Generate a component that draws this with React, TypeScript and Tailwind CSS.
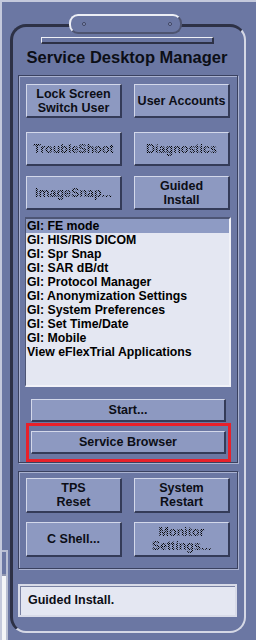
import React from 'react';

const listItems = [
  'GI: FE mode',
  'GI: HIS/RIS DICOM',
  'GI: Spr Snap',
  'GI: SAR dB/dt',
  'GI: Protocol Manager',
  'GI: Anonymization Settings',
  'GI: System Preferences',
  'GI: Set Time/Date',
  'GI: Mobile',
  'View eFlexTrial Applications',
];

type BtnProps = {
  children: React.ReactNode;
  disabled?: boolean;
  className?: string;
};

// raised motif-style button
const Btn = ({ children, disabled, className = '' }: BtnProps) => (
  <div
    className={`flex items-center justify-center text-center leading-[14px] bg-[#8d99c1] border-t border-l border-b-2 border-r-2 border-t-[#d3d8ea] border-l-[#d3d8ea] border-b-[#343b58] border-r-[#343b58] ${className}`}
  >
    {disabled ? (
      <span className="bg-[image:repeating-conic-gradient(#000000_0_25%,transparent_0_50%)] bg-[length:2px_2px] bg-clip-text text-transparent">
        {children}
      </span>
    ) : (
      <span className="text-[#0c0e16]">{children}</span>
    )}
  </div>
);

const App = () => {
  return (
    <div className="relative w-[256px] h-[640px] overflow-hidden bg-[#6b77a3] border-t-2 border-l-2 border-[#c4c9dc] font-['Liberation_Sans',Arial,sans-serif] font-bold text-[12.5px]">
      {/* window behind, peeking at bottom left */}
      <div className="absolute left-[-2px] top-[548px] w-[8px] h-[94px] border-t-2 border-r-2 border-[#b9bfd3] bg-[#6b77a3]">
        <div className="mt-[22px] h-full bg-[#f4f5f8] border-t-2 border-[#9097b0]" />
      </div>

      {/* main rounded panel */}
      <div className="ml-[8px] mt-[22px] w-[236px] h-[609px] rounded-[16px] border-t-[3px] border-l-[3px] border-r-2 border-b-2 border-t-[#2d3146] border-l-[#2d3146] border-r-[#d5d8e5] border-b-[#d5d8e5] flex flex-col items-start">
        {/* groove */}
        <div className="ml-[28px] mt-[10px] w-[173px] h-[7px] border-t border-l border-[#eef0f6] border-b-2 border-r-2 border-b-[#2d3146] border-r-[#2d3146]" />

        <div className="mt-[3px] w-full h-[20px] leading-[20px] text-center text-[16.5px] text-[#0c0e16] pr-[3px]">
          Service Desktop Manager
        </div>

        {/* top group */}
        <div className="ml-[5px] mt-[8px] w-[220px] border border-[#3a4160] shadow-[inset_1px_1px_0_#aab2d0,1px_1px_0_#aab2d0] flex flex-col items-start">
          <div className="ml-[7px] mt-[8px] flex gap-[12px]">
            <Btn className="w-[96px] h-[34px]">Lock Screen<br />Switch User</Btn>
            <Btn className="w-[96px] h-[34px]">User Accounts</Btn>
          </div>
          <div className="ml-[7px] mt-[14px] flex gap-[12px]">
            <Btn disabled className="w-[96px] h-[34px]">TroubleShoot</Btn>
            <Btn disabled className="w-[96px] h-[34px]">Diagnostics</Btn>
          </div>
          <div className="ml-[7px] mt-[10px] flex gap-[12px]">
            <Btn disabled className="w-[96px] h-[34px]">ImageSnap...</Btn>
            <Btn className="w-[96px] h-[34px]">Guided<br />Install</Btn>
          </div>

          {/* list */}
          <div className="ml-[6px] mt-[7px] w-[206px] h-[170px] bg-[#e4e7f2] border-t-2 border-l border-b-2 border-r-2 border-t-[#4d5575] border-l-[#4d5575] border-b-[#f1f2f8] border-r-[#f1f2f8] text-[12.3px] text-black">
            {listItems.map((item, i) => (
              <div
                key={item}
                className={`h-[14px] leading-[14px] pl-[1px] whitespace-nowrap ${i === 0 ? 'bg-[#8e9bc4]' : ''}`}
              >
                {item}
              </div>
            ))}
          </div>

          <Btn className="ml-[12px] mt-[12px] w-[195px] h-[23px]">Start...</Btn>

          <div className="ml-[7px] mt-[1px] w-[205px] border-[3px] border-[#e8202a] px-[2px] py-[5px]">
            <Btn className="w-[195px] h-[23px]">Service Browser</Btn>
          </div>
        </div>

        {/* bottom group */}
        <div className="ml-[5px] mt-[8px] w-[220px] border border-[#3a4160] shadow-[inset_1px_1px_0_#aab2d0,1px_1px_0_#aab2d0] flex flex-col items-start pb-[11px]">
          <div className="ml-[7px] mt-[6px] flex gap-[12px]">
            <Btn className="w-[96px] h-[35px]">TPS<br />Reset</Btn>
            <Btn className="w-[96px] h-[35px]">System<br />Restart</Btn>
          </div>
          <div className="ml-[7px] mt-[9px] flex gap-[12px]">
            <Btn className="w-[96px] h-[35px]">C Shell...</Btn>
            <Btn disabled className="w-[96px] h-[35px]">Monitor<br />Settings...</Btn>
          </div>
        </div>

        {/* status line */}
        <div className="ml-[5px] mt-[15px] w-[219px] h-[33px] border-2 border-[#d8dbe8] shadow-[inset_1px_1px_0_#7a82a3] bg-[#e4e7f2] flex items-center pl-[8px] text-[#0c0e16]">
          Guided Install.
        </div>
      </div>

      {/* handle on top of the panel */}
      <div className="absolute left-[67px] top-[12px] w-[113px] h-[20px] rounded-[9px] bg-[#6b77a3] border-2 border-t-[#eceef5] border-l-[#eceef5] border-b-[#4e5470] border-r-[#4e5470]">
        <div className="absolute left-[11px] top-[6px] w-[4px] h-[4px] rounded-full border border-[#3d4360] bg-[#8d99c1]" />
        <div className="absolute right-[8px] top-[6px] w-[4px] h-[4px] rounded-full border border-[#3d4360] bg-[#8d99c1]" />
      </div>
    </div>
  );
};

export default App;
